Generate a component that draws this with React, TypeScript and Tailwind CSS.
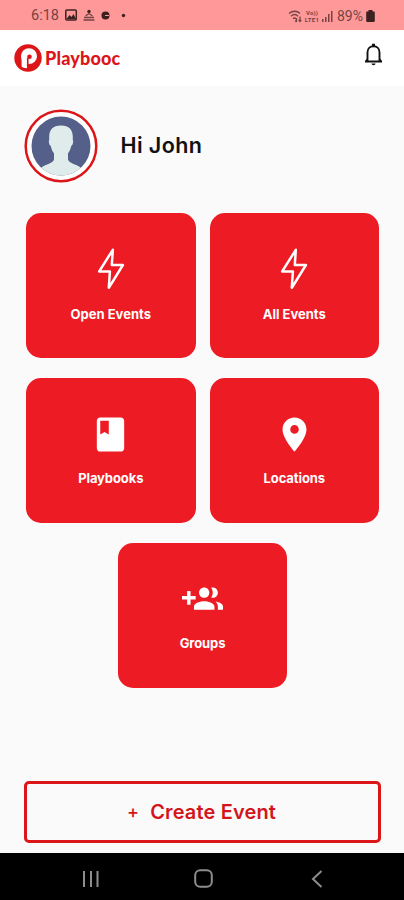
import type { ReactNode } from "react";

const BoltIcon = () => (
  <svg width="28" height="44" viewBox="0 0 28 44" fill="none">
    <path
      d="M15.8 2.8L2.2 24.4H12.9L11.8 40.8L25.9 18H14.8L15.8 2.8Z"
      stroke="currentColor"
      strokeWidth="2.5"
      strokeLinejoin="round"
    />
  </svg>
);

const BookIcon = () => (
  <svg width="41" height="41" viewBox="0 0 24 24" fill="currentColor">
    <path d="M18 2H6c-1.1 0-2 .9-2 2v16c0 1.1.9 2 2 2h12c1.1 0 2-.9 2-2V4c0-1.1-.9-2-2-2zM6 4h5v8l-2.5-1.5L6 12V4z" />
  </svg>
);

const PinIcon = () => (
  <svg width="41" height="41" viewBox="0 0 24 24" fill="currentColor">
    <path d="M12 2C8.13 2 5 5.13 5 9c0 5.25 7 13 7 13s7-7.75 7-13c0-3.87-3.13-7-7-7zm0 9.5a2.5 2.5 0 1 1 0-5 2.5 2.5 0 0 1 0 5z" />
  </svg>
);

const GroupAddIcon = () => (
  <svg width="41" height="41" viewBox="0 0 24 24" fill="currentColor">
    <path d="M8 10H5V7H3v3H0v2h3v3h2v-3h3v-2zm10 1c1.66 0 2.99-1.34 2.99-3S19.66 5 18 5c-.32 0-.63.05-.91.14.57.81.9 1.79.9 2.86s-.34 2.04-.9 2.86c.28.09.59.14.91.14zm-5 0c1.66 0 2.99-1.34 2.99-3S14.66 5 13 5c-1.66 0-3 1.34-3 3s1.34 3 3 3zm6.62 2.16c.83.73 1.38 1.66 1.38 2.84v2h3v-2c0-1.54-2.37-2.49-4.38-2.84zM13 13c-2 0-6 1-6 3v2h12v-2c0-2-4-3-6-3z" />
  </svg>
);

const TILES: { label: string; icon: ReactNode; tall?: boolean }[] = [
  { label: "Open Events", icon: <BoltIcon />, tall: true },
  { label: "All Events", icon: <BoltIcon />, tall: true },
  { label: "Playbooks", icon: <BookIcon /> },
  { label: "Locations", icon: <PinIcon /> },
  { label: "Groups", icon: <GroupAddIcon /> },
];

function StatusBar() {
  return (
    <div className="flex h-[30px] items-center bg-[#ff9999] pt-[2px] pr-[29px] pl-[31px] text-[#754343]">
      <span className="w-[34px] font-[Roboto] text-[14.5px] leading-none whitespace-nowrap">6:18</span>
      <svg className="-mt-[2px]" width="64" height="14" viewBox="0 0 64 14" fill="none">
        <rect x="0.8" y="2" width="10.5" height="10" rx="1" stroke="#3d2020" strokeWidth="1.5" />
        <path d="M1.5 11L4.5 7l2 2 2-3 2.5 5z" fill="#3d2020" />
        <circle cx="24" cy="3.4" r="1.7" fill="#3d2020" />
        <path d="M20.5 8L24 5.5 27.5 8M19 9.5h10M18.5 12h11" stroke="#754343" strokeWidth="1.3" />
        <circle cx="40.5" cy="7.5" r="4" fill="#3d2020" />
        <path d="M40 7.5h4" stroke="#ff9999" strokeWidth="1" />
        <circle cx="58.5" cy="7.5" r="1.7" fill="#3d2020" />
      </svg>
      <div className="ml-auto flex items-center">
        <svg width="14" height="13" viewBox="0 0 14 13" fill="none" stroke="#754343" strokeWidth="1.3">
          <path d="M1 3.5c3.5-3 8-3 11 0M3 6.2c2.2-2 5-2 7 0M5 8.7c1.2-1 2-1 3 0" />
          <path d="M8.5 8v4M7.2 10.5l1.3 1.5M12 11.5v-5M10.8 10L12 11.5 13.2 10" />
        </svg>
        <div className="ml-[2px] flex w-[16px] flex-col items-center font-[Roboto] text-[6px] leading-[7px] font-bold">
          <span className="tracking-[0.2px]">Vo))</span>
          <span className="tracking-[0.3px]">LTE1</span>
        </div>
        <svg className="ml-[2px]" width="11" height="11" viewBox="0 0 11 11" fill="currentColor">
          <path d="M0 8h1.5v3H0zM3 6h1.5v5H3zM6 3h1.5v8H6zM9 0h1.5v11H9z" />
        </svg>
        <span className="ml-[4px] w-[29px] font-[Roboto] text-[14px] leading-none whitespace-nowrap">89%</span>
        <svg width="9" height="12" viewBox="0 0 9 12" fill="#3d2020">
          <path d="M2.5 0h4v1.5H8a.8.8 0 0 1 .8.8v8.7a1 1 0 0 1-1 1H1.200a1 1 0 0 1-1-1V2.300a.8.8 0 0 1 .8-.8h1.500z" />
        </svg>
      </div>
    </div>
  );
}

function Header() {
  return (
    <header className="flex h-14 items-center justify-between bg-white pr-[21px] pl-[14px]">
      <div className="flex items-center">
        <svg width="28" height="28" viewBox="0 0 28 28" fill="none">
          <circle cx="14" cy="14" r="13.7" fill="#dc1519" />
          <circle cx="15" cy="12.2" r="8" fill="#fff" />
          <path d="M7.6 10.500h5.600v13.500c-2 .5-4.200-.4-5.600-1.500z" fill="#fff" />
          <path d="M13.600 23.500v-9.500" stroke="#dc1519" strokeWidth="1.400" />
          <path d="M14 13.500v7.500c1-.6 1.600-.8 3-.8" stroke="#dc1519" strokeWidth="0.800" />
          <circle cx="15.500" cy="12.800" r="2.300" fill="#dc1519" />
        </svg>
        <span className="ml-[3px] font-[Lato] text-[18px] leading-none font-black tracking-[0.15px] text-[#dc1519]">Playbooc</span>
      </div>
      <svg className="-mt-[7px]" width="19" height="23" viewBox="0 0 19 23" fill="none">
        <path
          d="M1 18.5h17M3.5 18V9.2c0-3.6 2.5-6 6-6s6 2.4 6 6V18M2 18.5l1.5-2.5M17 18.5L15.5 16"
          stroke="#111"
          strokeWidth="1.9"
        />
        <path d="M8 .8h3v2.5H8zM7.5 20.5h4c0 2.3-4 2.3-4 0z" fill="#111" />
      </svg>
    </header>
  );
}

function Avatar() {
  return (
    <svg className="-ml-[0.5px]" width="74" height="74" viewBox="0 0 74 74">
      <defs>
        <clipPath id="face">
          <circle cx="37" cy="37" r="29.5" />
        </clipPath>
      </defs>
      <circle cx="37" cy="37" r="35.3" fill="#fff" stroke="#dc1519" strokeWidth="2.5" />
      <g clipPath="url(#face)">
        <rect width="74" height="74" fill="#54608a" />
        <path
          d="M37 16.500c-9 0-12.500 5-11.700 14-.9 1.200-.4 5.600 1.500 6.500.6 3.400 1.800 5.700 3.200 7.300v6.200c-1 4-8 4.500-12.500 8L12 70h50l-5.500-11.500c-4.500-3.500-11.500-4-12.500-8v-6.200c1.400-1.600 2.600-3.900 3.200-7.300 1.900-.9 2.400-5.300 1.500-6.500C49.500 21.500 46 16.500 37 16.500z"
          fill="#e0ebeb"
        />
      </g>
    </svg>
  );
}

export default function App() {
  return (
    <div className="flex h-[900px] w-[404px] flex-col overflow-hidden bg-[#fafafa]">
      <StatusBar />
      <Header />
      <main className="flex flex-1 flex-col px-6">
        <div className="mt-[23px] flex h-[74px] items-center">
          <Avatar />
          <h1 className="ml-[23px] font-[Inter] text-[21.5px] leading-none font-semibold tracking-[0.4px] text-[#111]">Hi John</h1>
        </div>

        <div className="mt-[30px] ml-px flex flex-wrap justify-center gap-x-[14px] gap-y-[20.5px]">
          {TILES.map((t) => (
            <button
              key={t.label}
              className="flex h-[144.5px] w-[169.5px] flex-col items-center rounded-[15px] bg-[#ed1c24] pt-[34px] text-white"
            >
              <span className="flex h-[44px] items-center">{t.icon}</span>
              <span
                className={`font-[Inter] text-[13px] leading-4 font-bold ${t.tall ? "mt-[15px]" : "mt-[13.5px] tracking-[-0.1px]"}`}
              >
                {t.label}
              </span>
            </button>
          ))}
        </div>

        <button className="mt-auto mr-[-1px] mb-[10px] flex h-[62px] items-center justify-center gap-[11px] rounded-[5px] border-[3px] border-[#dc1519] pr-[2px] pb-[1px] font-[Inter] text-[20px] leading-none font-semibold tracking-[0.15px] text-[#d3161b]">
          <span className="text-[18px] font-medium">+</span>
          <span>Create Event</span>
        </button>
      </main>

      <nav className="flex h-[47px] items-center bg-black pt-1 pl-[82px] text-[#8d8d8d]">
        <svg width="18" height="18" viewBox="0 0 18 18" fill="none" stroke="currentColor" strokeWidth="2">
          <path d="M2 1v16M9 1v16M15.5 1v16" />
        </svg>
        <svg className="ml-[94px]" width="19" height="19" viewBox="0 0 19 19" fill="none" stroke="currentColor" strokeWidth="2">
          <rect x="1.2" y="1.2" width="16.6" height="16.6" rx="5" />
        </svg>
        <svg className="ml-[98px]" width="12" height="18" viewBox="0 0 12 18" fill="none" stroke="currentColor" strokeWidth="2">
          <path d="M10.5 1L2 9l8.5 8" />
        </svg>
      </nav>
    </div>
  );
}
